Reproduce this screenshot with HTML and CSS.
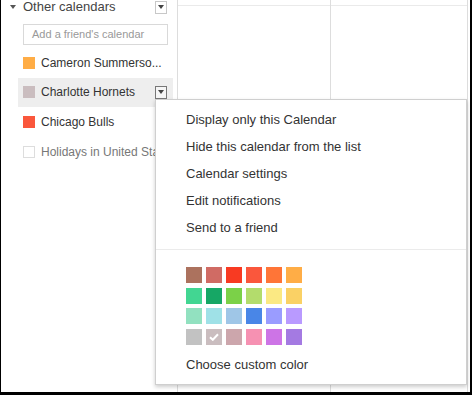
FILE: index.html
```html
<!DOCTYPE html>
<html>
<head>
<meta charset="utf-8">
<link rel="stylesheet" href="styles.css">
</head>
<body>
<div class="frame">
  <aside class="sidebar">
    <div class="side-head">
      <span class="tri"></span>
      <span class="side-title">Other calendars</span>
      <span class="ddbtn"><span class="ddtri"></span></span>
    </div>
    <div class="friend-input">Add a friend's calendar</div>
    <ul class="cal-list">
      <li class="cal-row"><span class="swatch" style="background:#ffad46"></span><span class="cal-name">Cameron Summerso...</span></li>
      <li class="cal-row active"><span class="swatch" style="background:#cabdbf"></span><span class="cal-name">Charlotte Hornets</span><span class="ddbtn dark"><span class="ddtri"></span></span></li>
      <li class="cal-row"><span class="swatch" style="background:#fa573c"></span><span class="cal-name">Chicago Bulls</span></li>
      <li class="cal-row off"><span class="swatch empty"></span><span class="cal-name">Holidays in United States</span></li>
    </ul>
  </aside>
  <main class="grid">
    <div class="col c1"><div class="col-head"></div></div>
    <div class="col c2"><div class="col-head"></div></div>
  </main>

  <div class="menu">
    <ul class="menu-items">
      <li>Display only this Calendar</li>
      <li>Hide this calendar from the list</li>
      <li>Calendar settings</li>
      <li>Edit notifications</li>
      <li>Send to a friend</li>
    </ul>
    <div class="sep"></div>
    <div class="palette">
      <span style="background:#ac725e"></span><span style="background:#d06b64"></span><span style="background:#f83a22"></span><span style="background:#fa573c"></span><span style="background:#ff7537"></span><span style="background:#ffad46"></span>
      <span style="background:#42d692"></span><span style="background:#16a765"></span><span style="background:#7bd148"></span><span style="background:#b3dc6c"></span><span style="background:#fbe983"></span><span style="background:#fad165"></span>
      <span style="background:#92e1c0"></span><span style="background:#9fe1e7"></span><span style="background:#9fc6e7"></span><span style="background:#4986e7"></span><span style="background:#9a9cff"></span><span style="background:#b99aff"></span>
      <span style="background:#c2c2c2"></span><span class="sel" style="background:#cabdbf"><svg width="10" height="8" viewBox="0 0 10 8"><path d="M1 4.2 L3.8 6.8 L9 1.2" fill="none" stroke="#fff" stroke-width="2"/></svg></span><span style="background:#cca6ac"></span><span style="background:#f691b2"></span><span style="background:#cd74e6"></span><span style="background:#a47ae2"></span>
    </div>
    <div class="custom">Choose custom color</div>
  </div>
</div>
</body>
</html>
```
FILE: styles.css
```css
html, body {
  margin: 0;
  padding: 0;
  background: #fff;
}
body {
  font-family: "Liberation Sans", Arial, sans-serif;
  font-size: 13px;
  color: #333;
}
.frame {
  position: relative;
  width: 472px;
  height: 395px;
  box-sizing: border-box;
  border-left: 1px solid #000;
  border-right: 2px solid #000;
  border-bottom: 3px solid #000;
  display: flex;
  overflow: hidden;
  background: #fff;
}
.sidebar {
  width: 176px;
  flex: none;
  box-sizing: border-box;
  padding-right: 10px;
}
.side-head {
  height: 14px;
  display: flex;
  align-items: center;
  padding-left: 9px;
  color: #444;
}
.tri {
  width: 0;
  height: 0;
  border-left: 3.5px solid transparent;
  border-right: 3.5px solid transparent;
  border-top: 4px solid #555;
  margin-right: 7px;
}
.side-title {
  font-size: 13px;
  line-height: 14px;
}
.ddbtn {
  margin-left: auto;
  width: 12px;
  height: 13px;
  flex: none;
  box-sizing: border-box;
  border: 1px solid #c8c8c8;
  background: #fff;
  display: flex;
  align-items: center;
  justify-content: center;
}
.ddbtn.dark {
  border-color: #777;
  background: #f5f5f5;
}
.ddtri {
  width: 0;
  height: 0;
  border-left: 3px solid transparent;
  border-right: 3px solid transparent;
  border-top: 4px solid #444;
}
.friend-input {
  margin: 10px 0 0 22px;
  width: 145px;
  height: 21px;
  box-sizing: border-box;
  border: 1px solid #d9d9d9;
  font-size: 11px;
  line-height: 19px;
  padding-left: 8px;
  color: #999;
}
.cal-list {
  list-style: none;
  margin: 3px 0 0 17px;
  padding: 0;
}
.cal-row {
  height: 29.6px;
  display: flex;
  align-items: center;
  padding: 0 6px 0 5px;
  width: 155px;
  box-sizing: border-box;
  white-space: nowrap;
}
.cal-row.active {
  background: #eee;
}
.swatch {
  width: 12px;
  height: 12px;
  flex: none;
  margin-right: 6px;
}
.swatch.empty {
  box-sizing: border-box;
  border: 1px solid #ddd;
  background: #fff;
}
.cal-name {
  color: #333;
  font-size: 12px;
  line-height: 16px;
}
.cal-row.off .cal-name {
  color: #777;
}
.grid {
  flex: 1;
  display: flex;
  border-left: 1px solid #ddd;
  padding-right: 2px;
}
.col {
  border-right: 1px solid #ddd;
}
.c1 {
  width: 152px;
}
.c2 {
  flex: 1;
}
.col-head {
  height: 5px;
  border-bottom: 1px solid #eaeaea;
}
.menu {
  position: absolute;
  left: 154px;
  top: 99px;
  width: 312px;
  height: 286px;
  box-sizing: border-box;
  border: 1px solid #cfcfcf;
  background: #fff;
  box-shadow: 0 2px 4px rgba(0, 0, 0, 0.2);
  padding: 6px 0 0 30px;
}
.menu-items {
  list-style: none;
  margin: 0;
  padding: 0;
}
.menu-items li {
  height: 27px;
  line-height: 27px;
  color: #333;
}
.sep {
  height: 1px;
  background: #ebebeb;
  margin: 8px 0 17px -30px;
}
.palette {
  display: grid;
  grid-template-columns: repeat(6, 16px);
  grid-auto-rows: 16px;
  column-gap: 4px;
  row-gap: 4.7px;
}
.palette span {
  display: flex;
  align-items: center;
  justify-content: center;
}
.custom {
  margin-top: 13px;
  line-height: 14px;
  color: #333;
}
```
